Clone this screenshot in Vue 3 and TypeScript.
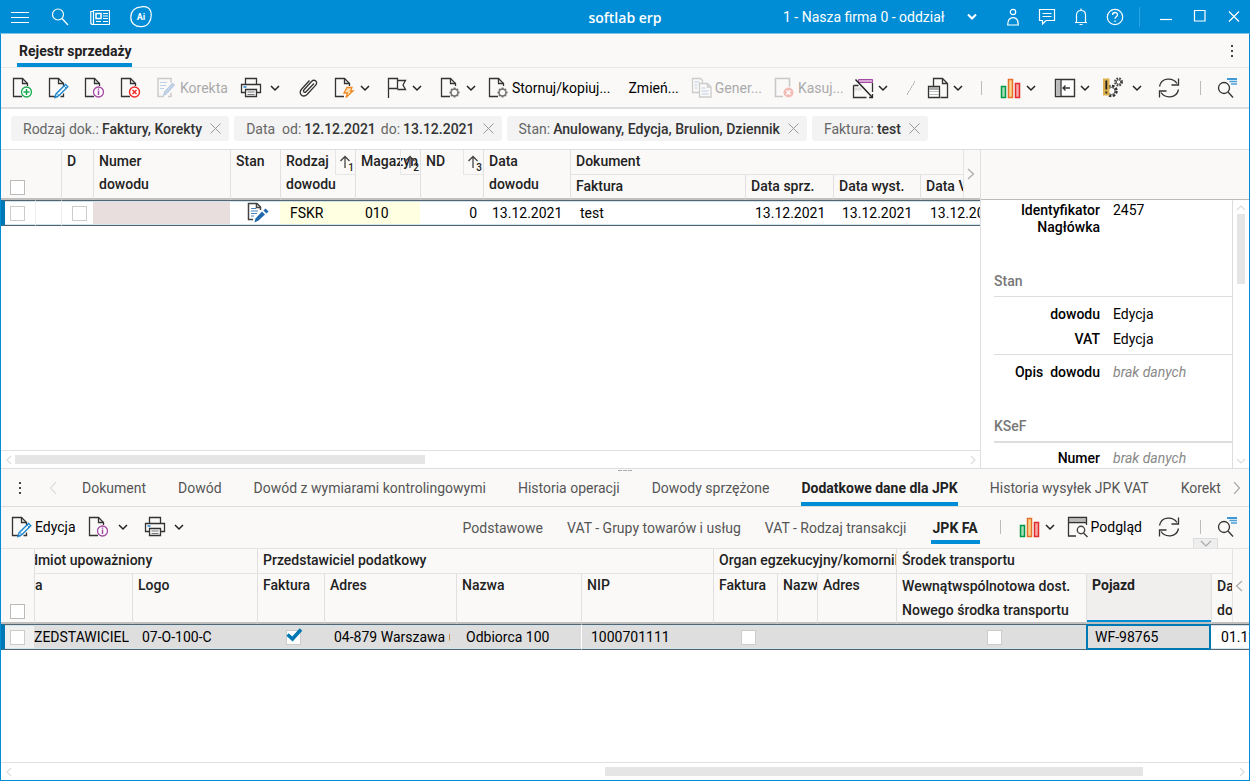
<script setup lang="ts">
import { ref } from 'vue'

const doc = '<path class="k" d="M10 19.5H1.500V1.500H10.500L15.500 6.500V9"/><path class="k" d="M10.500 1.500V6.500H15.500"/>'
const gear = '<circle cx="14.500" cy="15.500" r="3.500" fill="none" stroke="#777" stroke-width="1.500"/><path d="M14.500 10.500v2M14.500 18.500v2M9.500 15.500h2M17.500 15.500h2M11 12l1.400 1.400M16.600 17.600L18 19M18 12l-1.400 1.400M12.400 17.600L11 19" stroke="#777" stroke-width="2"/>'
const chart = '<path d="M1.500 9.500h4v11h-4z" fill="#a9dbb8" stroke="#009a44" stroke-width="1.500"/><path d="M8.500 2.500h4v18h-4z" fill="#fbd48e" stroke="#e6702a" stroke-width="1.500"/><path d="M15.500 6.500h4v14h-4z" fill="#f5a9a9" stroke="#e22b2b" stroke-width="1.500"/>'
const pen = '<path d="M17.500 7.500l2.300 2.300L10.500 19l-3.500 1.500 1-3.600z" fill="#fff" stroke="#1b85cf" stroke-width="1.400"/><path d="M9 16.500l2 2M16 9l2.300 2.300" stroke="#1b85cf"/>'

const icons: Record<string, string> = {
  menu: '<path class="w" d="M1 5.500h18M1 10.500h18M1 15.500h18"/>',
  find: '<circle class="w" cx="8" cy="7.500" r="5.500"/><path class="w" d="M12 11.500l6 6.500"/>',
  news: '<path class="w" d="M3.500 3.500h16v14h-16z"/><path class="w" d="M3 4.500H.8v11q0 2 2 2h1"/><path d="M6 6.500h5v5H6z" fill="none" stroke="#fff" stroke-width="1.500"/><path class="w" d="M13 6.500h5M13 9h5M13 11.500h5M6 14.500h5M13 14.500h5"/>',
  ai: '<path class="w" d="M11 .8C17 0 21 2 21.200 8.500C21.500 15.500 17.500 20.500 11.500 20.700C5 21 .8 17 .8 11.500C.8 5 5 1.300 11 .8z"/><text x="11" y="14" text-anchor="middle" font-size="9" font-weight="700" fill="#fff">Ai</text>',
  person: '<circle class="w" cx="10" cy="5" r="2.700"/><path class="w" d="M4.700 18c0-5 2-7.300 5.300-7.300s5.300 2.300 5.300 7.300z"/>',
  chat: '<path class="w" d="M2.500 2.500h15v11H9l-3.500 3.500v-3.500h-3z"/><path class="w" d="M5.500 6.500h9M5.500 9.500h9"/>',
  bell: '<path class="w" d="M4 15.500h12M5.500 15.500V8c0-3 2-4.500 4.500-4.500S14.500 5 14.500 8v7.500M10 1.500v2M8.500 17.500h3"/>',
  help: '<circle class="w" cx="10" cy="10" r="7.700"/><path d="M7.500 8c0-3.300 5-3.300 5-.3 0 2-2.500 2-2.500 4M10 13.500v1.500" fill="none" stroke="#fff" stroke-width="1.300"/>',
  min: '<path class="w" d="M4 12.500h12"/>',
  max: '<path class="w" d="M4.500 3.500h10.500v10.500h-10.500z"/>',
  close: '<path class="w" d="M5 4.500l10 10M15 4.500l-10 10"/>',
  add: doc + '<circle cx="14.500" cy="15" r="5" fill="#fff" stroke="#1aab50" stroke-width="1.300"/><path d="M14.500 12v6M11.500 15h6" stroke="#1aab50" stroke-width="1.500"/>',
  edit: doc + pen + '<path class="k" d="M12.500 19.500h3v-3"/>',
  info: doc + '<circle cx="14.500" cy="15" r="5" fill="#fff" stroke="#a349a4" stroke-width="1.300"/><path d="M14.500 13.500v4.500M14.500 11.500v1.200" stroke="#a349a4" stroke-width="1.500"/>',
  del: doc + '<circle cx="14.500" cy="15" r="5" fill="#fff" stroke="#ee2b2b" stroke-width="1.400"/><path d="M12.500 13l4 4M16.500 13l-4 4" stroke="#ee2b2b" stroke-width="1.500"/>',
  correct: '<path d="M8 19.500H2V1.500h13v4M15 16v3.500h-3" fill="none" stroke="#ccc" stroke-width="1.500"/><path d="M4 5.500h7M4 8.500h6M4 11.500h4" stroke="#bcd0e6"/><path d="M16.500 6l2 2L11 16.500l-3.500 2 1-3.700z" fill="#c3d4ea" stroke="#b4c8e2"/>',
  print: '<path class="k" d="M5.500 7V1.500h11V7M5.500 15.500h-4V7.500h19v8h-4M5.500 12.500h11v7h-11z" stroke-width="1.500"/><path d="M7.500 15h7M7.500 17.500h7" stroke="#777"/><path d="M3.500 10h3" stroke="#1b85cf" stroke-width="1.500"/>',
  clip: '<path class="k" d="M16 6.500L8 14.800c-1.500 1.500-3.500-.4-2-2L13.500 4.500c3-3 7 .5 4.200 3.600L9.300 17.300C5 21.500-.5 16.500 3.700 12L11.500 3.500" stroke-width="1.500"/>',
  bolt: doc + '<path d="M13 10.500h5l-1.500 3.500h2.500l-7 6.500 1.500-4.500h-3.500z" fill="#ffe2b5" stroke="#f08a24" stroke-width="1.300"/>',
  flag: '<path class="k" d="M2.500 21V1.500h9v10h-9M11.500 3.500h8l-2.500 4.500 2.500 4.500h-8" stroke-width="1.500"/>',
  gearDoc: doc + gear,
  generate: '<g fill="none" stroke="#ccc" stroke-width="1.300"><path d="M8 15.500H1.500V1.500h8l2 2v3"/><path d="M8.500 6.500h8l3.500 3.500v10H8.500z"/><path d="M16.500 6.500v3.500h3.500"/></g><path d="M3.500 5h5M3.500 8h3M3.500 11h3M10.500 11h4M10.500 14h7M10.500 17h7" stroke="#bcd0e6"/>',
  erase: '<path d="M9 19.500H1.500V1.500h14v8" fill="none" stroke="#c8c8c8" stroke-width="1.500"/><circle cx="14.500" cy="15.500" r="5" fill="#f2bdb6"/><path d="M12.500 13.500l4 4M16.500 13.500l-4 4" stroke="#fff" stroke-width="1.500"/>',
  windowOff: '<path d="M6.500 2.500h14v3h-14z" fill="#d8a8d8" stroke="#a349a4"/><path d="M1.500 10.500h8v3h-8z" fill="#ddd"/><path class="k" d="M20.500 6v9M1.500 8.500v12h13M1.500 8.500h5M17 20.500h3.500V17"/><path d="M3.500 2.500l17 18" stroke="#222" stroke-width="1.500"/>',
  tableDoc: '<path class="k" d="M6.500 9V1.500h9l5 5v14h-7M15.500 1.500v5h5"/><path d="M1.500 9.500h11v11h-11z" fill="#fff" stroke="#333" stroke-width="1.300"/><path d="M2 10h10v3H2z" fill="#aaa"/><path d="M2 14.500h10M2 17.500h10" stroke="#bbb"/>',
  chart,
  panel: '<path d="M1.500 2.500h19v17h-19z" fill="#fff" stroke="#333" stroke-width="1.400"/><path d="M2.200 3.200h4.300v15.600H2.200z" fill="#bbb"/><path class="k" d="M7 3v16M9 11h7M11.500 8.500L9 11l2.500 2.500"/>',
  alert: '<circle cx="9.500" cy="14" r="5" fill="none" stroke="#333" stroke-width="2.500" stroke-dasharray="2.500 1.400"/><circle cx="9.500" cy="14" r="3.500" fill="#fff" stroke="#555"/><circle cx="16.500" cy="5" r="3.500" fill="none" stroke="#444" stroke-width="2" stroke-dasharray="1.700 1.100"/><circle cx="16.500" cy="5" r="2.200" fill="#fff" stroke="#555"/><path d="M1 1.500h6.500v17H1z" fill="#ddb04d"/><path d="M4.300 3.500v9M4.300 14.500v2" stroke="#222" stroke-width="1.800"/>',
  refresh: '<path class="k" d="M1.500 9.500C3.500 0 15 .5 19 6.500M20.500 12.500C18.500 22 7 21.500 3 15.500M20.500 1.500v6.500h-7M1.500 20.500V14h7" stroke-width="1.400"/>',
  query: '<circle class="k" cx="7" cy="11" r="5.500" stroke-width="1.500"/><path class="k" d="M11 15l5 5.500" stroke-width="1.500"/><path d="M10 2h10" stroke="#0078c8" stroke-width="1.500"/><path d="M12.500 4.500h7.500M14 7h6" stroke="#4a9fd8" stroke-width="1.300"/>',
  preview: '<path d="M1.500 2.500h18v3h-18z" fill="#bbb"/><path class="k" d="M9 20H1.500V1.500h18V9M1.500 6.500h18"/><circle cx="14" cy="14" r="3.700" fill="#fff" stroke="#444" stroke-width="1.400"/><path class="k" d="M16.500 17l4 4"/>',
  state: '<path d="M6 17.500H1.500V1.500h8.500l3.500 3.500V8" fill="none" stroke="#444" stroke-width="1.500"/><path d="M9.500 1.500V5.500h4" fill="none" stroke="#444" stroke-width="1.500"/><path d="M4 6.500h5M4 9h7M4 11.500h6M4 14h3" stroke="#4a87c0"/><path d="M15 9.500l3 3-6.500 6-4 2 1-4z" fill="#1f68b0"/><path d="M17.500 7.500l3 3" stroke="#1f68b0" stroke-width="3"/>',
}

interface Tool { icon?: string; label?: string; menu?: boolean; off?: boolean; gap?: string; sep?: string; tip: string; inner?: string }
const tools: Tool[] = [
  { icon: 'add', tip: 'Dodaj' },
  { icon: 'edit', tip: 'Edytuj' },
  { icon: 'info', tip: 'Informacje' },
  { icon: 'del', tip: 'Usuń' },
  { icon: 'correct', label: 'Korekta', off: true, tip: 'Korekta' },
  { icon: 'print', menu: true, gap: 'g12', inner: 'loose', tip: 'Drukuj' },
  { icon: 'clip', gap: 'g18', tip: 'Załączniki' },
  { icon: 'bolt', menu: true, tip: 'Akcje' },
  { icon: 'flag', menu: true, gap: 'g16', tip: 'Flaga' },
  { icon: 'gearDoc', menu: true, gap: 'g18', tip: 'Operacje' },
  { icon: 'gearDoc', label: 'Stornuj/kopiuj...', gap: 'g12', tip: 'Stornuj/kopiuj' },
  { label: 'Zmień...', gap: 'g18', tip: 'Zmień' },
  { icon: 'generate', label: 'Gener...', off: true, gap: 'g12', tip: 'Generuj' },
  { icon: 'erase', label: 'Kasuj...', off: true, gap: 'g12', tip: 'Kasuj' },
  { icon: 'windowOff', menu: true, gap: 'g8', tip: 'Okno' },
  { sep: 'slash', gap: 'push', tip: '' },
  { icon: 'tableDoc', menu: true, gap: 'g12', tip: 'Zestawienia' },
  { sep: 'bar', gap: 'g18', tip: '' },
  { icon: 'chart', menu: true, gap: 'g18', tip: 'Wykresy' },
  { icon: 'panel', menu: true, gap: 'g18', tip: 'Panel' },
  { icon: 'alert', menu: true, gap: 'g12', inner: 'loose', tip: 'Ustawienia' },
  { icon: 'refresh', gap: 'g16', tip: 'Odśwież' },
  { sep: 'bar', gap: 'g20', tip: '' },
  { icon: 'query', gap: 'g16', tip: 'Wyszukaj' },
]

const filters = [
  [['Rodzaj dok.:', 'Faktury, Korekty']],
  [['Data\u00a0 od:', '12.12.2021'], ['do:', '13.12.2021']],
  [['Stan:', 'Anulowany, Edycja, Brulion, Dziennik']],
  [['Faktura:', 'test']],
]

const tabs = ['Dokument', 'Dowód', 'Dowód z wymiarami kontrolingowymi', 'Historia operacji', 'Dowody sprzężone', 'Dodatkowe dane dla JPK', 'Historia wysyłek JPK VAT', 'Korekt']
const subTabs = ['Podstawowe', 'VAT - Grupy towarów i usług', 'VAT - Rodzaj transakcji', 'JPK FA']
const tab = ref('Dodatkowe dane dla JPK')
const subTab = ref('JPK FA')
const company = ref('1 - Nasza firma 0 - oddział')
</script>

<template>
  <div class="app">
    <header class="title-bar">
      <div class="tb-left">
        <button aria-label="Menu"><svg width="20" height="20" viewBox="0 0 20 20" v-html="icons.menu" /></button>
        <button aria-label="Szukaj"><svg width="20" height="20" viewBox="0 0 20 20" v-html="icons.find" /></button>
        <button aria-label="Aktualności"><svg width="20" height="20" viewBox="0 0 20 20" v-html="icons.news" /></button>
        <button aria-label="Asystent"><svg width="22" height="22" viewBox="0 0 22 22" v-html="icons.ai" /></button>
      </div>
      <div class="brand">softlab erp</div>
      <div class="tb-right">
        <label class="company">
          <select v-model="company" aria-label="Firma"><option>1 - Nasza firma 0 - oddział</option></select>
          <svg width="10" height="8" viewBox="0 0 10 8"><path d="M1 1.500l4 4 4-4" fill="none" stroke="#fff" stroke-width="2" /></svg>
        </label>
        <button aria-label="Użytkownik"><svg width="20" height="20" viewBox="0 0 20 20" v-html="icons.person" /></button>
        <button aria-label="Wiadomości"><svg width="20" height="20" viewBox="0 0 20 20" v-html="icons.chat" /></button>
        <button aria-label="Powiadomienia"><svg width="20" height="20" viewBox="0 0 20 20" v-html="icons.bell" /></button>
        <button aria-label="Pomoc"><svg width="20" height="20" viewBox="0 0 20 20" v-html="icons.help" /></button>
        <span class="tb-sep" />
        <button aria-label="Minimalizuj"><svg width="20" height="20" viewBox="0 0 20 20" v-html="icons.min" /></button>
        <button aria-label="Maksymalizuj"><svg width="20" height="20" viewBox="0 0 20 20" v-html="icons.max" /></button>
        <button aria-label="Zamknij"><svg width="20" height="20" viewBox="0 0 20 20" v-html="icons.close" /></button>
      </div>
    </header>

    <div class="window">
      <div class="page-tabs">
        <button class="page-tab">Rejestr sprzedaży</button>
        <button class="dots" aria-label="Więcej"><i /><i /><i /></button>
      </div>

      <div class="toolbar main-tools">
        <template v-for="(t, i) in tools" :key="i">
          <span v-if="t.sep" :class="[t.sep, t.gap]" />
          <button v-else class="tool" :class="[t.gap, t.inner]" :disabled="t.off" :aria-label="t.tip">
            <svg v-if="t.icon" width="22" height="22" viewBox="0 0 22 22" v-html="icons[t.icon]" />
            <span v-if="t.label">{{ t.label }}</span>
            <svg v-if="t.menu" class="chev" width="10" height="8" viewBox="0 0 10 8"><path d="M1 2l4 4 4-4" /></svg>
          </button>
        </template>
      </div>

      <div class="filters">
        <div v-for="(f, i) in filters" :key="i" class="chip">
          <template v-for="(p, j) in f" :key="j"><span>{{ p[0] }}</span><b>{{ p[1] }}</b></template>
          <button aria-label="Usuń filtr"><svg width="11" height="11" viewBox="0 0 11 11"><path d="M.5 .5l10 10M10.500 .5l-10 10" stroke="#999" /></svg></button>
        </div>
      </div>

      <section class="upper">
        <div class="grid-pane">
          <div class="grid-body">
            <table>
              <colgroup>
                <col class="c34"><col class="c26"><col class="c32"><col class="c137"><col class="c50"><col class="c75"><col class="c65"><col class="c63"><col class="c87"><col class="c175"><col class="c88"><col class="c87"><col>
              </colgroup>
              <thead>
                <tr>
                  <th rowspan="2" colspan="2" class="pick"><input type="checkbox" aria-label="Zaznacz wszystkie"></th>
                  <th rowspan="2">D</th>
                  <th rowspan="2">Numer<br>dowodu</th>
                  <th rowspan="2">Stan</th>
                  <th rowspan="2">Rodzaj<br>dowodu<button class="sort" aria-label="Sortuj"><svg width="14" height="14" viewBox="0 0 14 14"><path d="M6 13V2M1.500 6L6 1.500 10.500 6" /></svg><small>1</small></button></th>
                  <th rowspan="2">Magazyn<button class="sort clear" aria-label="Sortuj"><svg width="14" height="14" viewBox="0 0 14 14"><path d="M6 13V2M1.500 6L6 1.500 10.500 6" /></svg><small>2</small></button></th>
                  <th rowspan="2">ND<button class="sort" aria-label="Sortuj"><svg width="14" height="14" viewBox="0 0 14 14"><path d="M6 13V2M1.500 6L6 1.500 10.500 6" /></svg><small>3</small></button></th>
                  <th rowspan="2">Data<br>dowodu</th>
                  <th colspan="4" class="group">Dokument</th>
                </tr>
                <tr class="sub">
                  <th>Faktura</th><th>Data sprz.</th><th>Data wyst.</th><th>Data VAT</th>
                </tr>
              </thead>
              <tbody>
                <tr>
                  <td class="pick"><input type="checkbox" aria-label="Zaznacz wiersz"></td>
                  <td class="line" />
                  <td class="mid line"><input type="checkbox" aria-label="D"></td>
                  <td class="pink" />
                  <td class="mid"><svg width="22" height="22" viewBox="0 0 22 22" v-html="icons.state" /></td>
                  <td class="yellow">FSKR</td><td class="yellow">010</td><td class="num">0</td><td class="date">13.12.2021</td><td>test</td><td>13.12.2021</td><td class="date">13.12.2021</td><td>13.12.2021</td>
                </tr>
              </tbody>
            </table>
            <button class="gutter" aria-label="Dalej"><svg width="8" height="12" viewBox="0 0 8 12"><path d="M1 1l5.500 5L1 11" /></svg></button>
          </div>
          <div class="hscroll">
            <svg width="6" height="10" viewBox="0 0 6 10"><path d="M5 1L1 5l4 4" /></svg>
            <div class="track"><span class="thumb first" /></div>
            <svg width="6" height="10" viewBox="0 0 6 10"><path d="M1 1l4 4-4 4" /></svg>
          </div>
        </div>

        <aside class="details">
          <div class="details-head" />
          <div class="details-body">
            <div class="details-list">
              <dl class="top"><dt>Identyfikator Nagłówka</dt><dd>2457</dd></dl>
              <h3>Stan</h3>
              <dl class="ruled"><dt>dowodu</dt><dd>Edycja</dd><dt>VAT</dt><dd>Edycja</dd></dl>
              <dl class="ruled last"><dt>Opis&nbsp; dowodu</dt><dd class="none">brak danych</dd></dl>
              <h3>KSeF</h3>
              <dl class="thick"><dt>Numer</dt><dd class="none">brak danych</dd></dl>
            </div>
            <div class="vscroll">
              <svg width="10" height="6" viewBox="0 0 10 6"><path d="M1 5l4-4 4 4" /></svg>
              <span class="vthumb" />
              <svg width="10" height="6" viewBox="0 0 10 6"><path d="M1 1l4 4 4-4" /></svg>
            </div>
          </div>
        </aside>
      </section>

      <section class="lower">
        <div class="grip"><i /><i /><i /></div>
        <nav class="tabs">
          <button class="dots" aria-label="Więcej"><i /><i /><i /></button>
          <button class="arrow faint" aria-label="Poprzednie"><svg width="8" height="12" viewBox="0 0 8 12"><path d="M7 0L1.500 6 7 12" /></svg></button>
          <div class="tab-strip">
            <button v-for="t in tabs" :key="t" :class="{ on: t === tab }" @click="tab = t">{{ t }}</button>
          </div>
          <button class="arrow" aria-label="Następne"><svg width="8" height="12" viewBox="0 0 8 12"><path d="M1 0l5.500 6L1 12" /></svg></button>
        </nav>

        <div class="toolbar sub-tools">
          <button class="tool" aria-label="Edycja"><svg width="22" height="22" viewBox="0 0 22 22" v-html="icons.edit" /><span>Edycja</span></button>
          <button class="tool loose g12" aria-label="Informacje"><svg width="22" height="22" viewBox="0 0 22 22" v-html="icons.info" /><svg class="chev" width="10" height="8" viewBox="0 0 10 8"><path d="M1 2l4 4 4-4" /></svg></button>
          <button class="tool loose g16" aria-label="Drukuj"><svg width="22" height="22" viewBox="0 0 22 22" v-html="icons.print" /><svg class="chev" width="10" height="8" viewBox="0 0 10 8"><path d="M1 2l4 4 4-4" /></svg></button>
          <div class="sub-tabs push">
            <button v-for="t in subTabs" :key="t" :class="{ on: t === subTab }" @click="subTab = t">{{ t }}</button>
          </div>
          <span class="bar g20" />
          <button class="tool g18" aria-label="Wykresy"><svg width="22" height="22" viewBox="0 0 22 22" v-html="icons.chart" /><svg class="chev" width="10" height="8" viewBox="0 0 10 8"><path d="M1 2l4 4 4-4" /></svg></button>
          <button class="tool g12" aria-label="Podgląd"><svg width="22" height="22" viewBox="0 0 22 22" v-html="icons.preview" /><span>Podgląd</span></button>
          <button class="tool g16" aria-label="Odśwież"><svg width="22" height="22" viewBox="0 0 22 22" v-html="icons.refresh" /></button>
          <span class="bar g20" />
          <button class="tool g16" aria-label="Wyszukaj"><svg width="22" height="22" viewBox="0 0 22 22" v-html="icons.query" /></button>
          <button class="collapse" aria-label="Zwiń"><svg width="12" height="7" viewBox="0 0 12 7"><path d="M1 1l5 5 5-5" /></svg></button>
        </div>

        <div class="grid-body">
          <table class="jpk">
            <colgroup>
              <col class="c33"><col class="c98"><col class="c125"><col class="c67"><col class="c132"><col class="c125"><col class="c132"><col class="c64"><col class="c40"><col class="c79"><col class="c190"><col class="c125"><col>
            </colgroup>
            <thead>
              <tr>
                <th rowspan="2" class="pick"><input type="checkbox" aria-label="Zaznacz wszystkie"></th>
                <th colspan="2" class="group cut-group">dmiot upoważniony</th>
                <th colspan="4" class="group">Przedstawiciel podatkowy</th>
                <th colspan="3" class="group">Organ egzekucyjny/komornik</th>
                <th colspan="3" class="group">Środek transportu</th>
              </tr>
              <tr class="sub deep">
                <th class="cut">a</th><th>Logo</th><th>Faktura</th><th>Adres</th><th>Nazwa</th><th>NIP</th><th>Faktura</th><th>Nazwa</th><th>Adres</th>
                <th class="two">Wewnątwspólnotowa dost.<br>Nowego środka transportu</th><th class="active">Pojazd</th><th class="two">Data<br>dostawy</th>
              </tr>
            </thead>
            <tbody>
              <tr>
                <td class="pick"><input type="checkbox" aria-label="Zaznacz wiersz"></td>
                <td class="cut">ZEDSTAWICIEL</td><td>07-O-100-C</td>
                <td class="mid"><span class="ticked"><input type="checkbox" checked aria-label="Faktura"><svg width="17" height="14" viewBox="0 0 17 14"><path d="M1.500 6.500l5 4.500L15 1.500" /></svg></span></td>
                <td class="trim"><span>04-879 Warszawa ul. Prosta</span></td><td>Odbiorca 100</td><td class="split">1000701111</td>
                <td class="mid"><input type="checkbox" aria-label="Organ faktura"></td><td /><td />
                <td class="mid"><input type="checkbox" aria-label="Nowy środek transportu"></td>
                <td class="focus">WF-98765</td><td class="plain">01.12.2021</td>
              </tr>
            </tbody>
          </table>
          <button class="gutter low" aria-label="Wstecz"><svg width="8" height="12" viewBox="0 0 8 12"><path d="M7 1L1.500 6 7 11" /></svg></button>
        </div>
        <div class="hscroll bottom">
          <svg width="6" height="10" viewBox="0 0 6 10"><path d="M5 1L1 5l4 4" /></svg>
          <div class="track"><span class="thumb second" /></div>
          <svg width="6" height="10" viewBox="0 0 6 10"><path d="M1 1l4 4-4 4" /></svg>
        </div>
      </section>
    </div>
  </div>
</template>

<style>
body { margin: 0; }
.k { fill: none; stroke: #333; stroke-width: 1.3; }
.w { fill: none; stroke: #fff; stroke-width: 1.2; }
</style>

<style scoped>
* { box-sizing: border-box; }
.app { height: 100vh; display: flex; flex-direction: column; overflow: hidden; font: 14px/16px Roboto, "Liberation Sans", sans-serif; color: #000; background: #fff; }
button, select, input { font: inherit; color: inherit; background: none; border: 0; padding: 0; margin: 0; }
svg { display: block; flex: none; }
button { flex: none; }

.title-bar { flex: none; height: 33px; background: #008dd6; color: #fff; display: grid; grid-template-columns: 1fr auto 1fr; align-items: center; }
.tb-left { display: flex; align-items: center; gap: 20px; padding-left: 10px; }
.brand { font: 600 14px/20px "Open Sans", "Noto Sans", sans-serif; padding-top: 2px; }
.tb-right { display: flex; align-items: center; justify-content: flex-end; gap: 14px; padding-right: 6px; }
.company { display: flex; align-items: center; gap: 22px; padding-right: 12px; }
.company select { appearance: none; }
.company option { color: #000; }
.tb-sep { width: 1px; height: 20px; margin-right: 2px; background: #2ba4e4; }

.window { flex: 1; min-height: 0; display: flex; flex-direction: column; border: 1px solid #008dd6; border-top-color: #7cc3ea; }
.page-tabs { flex: none; height: 34px; display: flex; justify-content: space-between; background: #faf9f8; border-bottom: 1px solid #e8e8e8; padding: 0 16px; }
.page-tab { font-weight: 700; color: #222; padding: 4px 0 0 2px; border-bottom: 4px solid #008dd6; }
.dots { display: flex; flex-direction: column; justify-content: center; gap: 3px; }
.dots i { width: 2px; height: 2px; background: #444; }

.toolbar { flex: none; display: flex; align-items: center; background: #faf9f8; }
.main-tools { height: 41px; border-bottom: 2px solid #dedede; padding: 0 10px 0 11px; }
.tool { display: flex; align-items: center; gap: 2px; }
.tool + .tool { margin-left: 14px; }
.tool .chev { margin-left: 2px; }
.tool.loose .chev { margin-left: 6px; }
.tool:disabled { color: #aaa; }
.toolbar .g8 { margin-left: 8px; }
.toolbar .g12 { margin-left: 12px; }
.toolbar .g16 { margin-left: 16px; }
.toolbar .g18 { margin-left: 18px; }
.toolbar .g20 { margin-left: 20px; }
.toolbar .push { margin-left: auto; }
.chev path { fill: none; stroke: #222; stroke-width: 1.5; }
.bar { width: 1px; height: 14px; background: #bbb; }
.slash { width: 8px; height: 14px; background: linear-gradient(120deg, transparent 47%, #bbb 47%, #bbb 53%, transparent 53%); }

.filters { flex: none; height: 40px; display: flex; align-items: center; gap: 5px; padding: 0 10px 1px; }
.chip { display: flex; align-items: center; gap: 3px; height: 25px; padding: 0 8px 0 12px; background: #f3f3f3; border-radius: 3px; color: #666; }
.chip b { font-weight: 500; color: #333; }
.chip b + span { margin-left: 2px; }
.chip button { margin-left: 5px; }

.upper { flex: none; height: 319px; display: flex; border-top: 1px solid #ddd; }
.grid-pane { flex: 1; min-width: 0; display: flex; flex-direction: column; }
.grid-body { flex: 1; min-height: 0; position: relative; overflow: hidden; }
table { width: 100%; table-layout: fixed; border-collapse: separate; border-spacing: 0; }
th { padding: 0 0 0 5px; background: #faf9f8; border-left: 1px solid #e0e0e0; text-align: left; vertical-align: top; font-weight: 500; color: #222; line-height: 23px; white-space: nowrap; overflow: hidden; position: relative; }
th[rowspan], .sub th { border-bottom: 2px solid #c0c0c0; }
.sub th { height: 25px; line-height: 22px; }
.sub th.two { line-height: 24px; }
th.group { height: 25px; border-bottom: 1px solid #e4e4e4; line-height: 22px; }
th.pick { padding: 0 0 3px 9px; vertical-align: bottom; border-left: 0; }
td { height: 26px; padding: 0 0 0 10px; border-top: 1px solid #56646f; border-bottom: 1px solid #56646f; box-shadow: inset 0 1px #cfe3ec, inset 0 -1px #cfe3ec; white-space: nowrap; overflow: hidden; }
td.date { padding-left: 9px; }
td.pick { border-left: 4px solid #0078b4; padding-left: 5px; }
td.mid { text-align: center; padding: 0 0 0 5px; }
td.mid > svg { margin: 0 auto; }
td.line { border-left: 1px solid #eee; padding-left: 4px; }
td.num { text-align: right; padding-right: 6px; }
.pink { background: #e8dedd; }
.yellow { background: #ffffe1; }
input[type=checkbox] { appearance: none; display: inline-block; vertical-align: middle; width: 15px; height: 15px; background: #fff; border: 1px solid #bbb; }
td input[type=checkbox] { border-color: #ccc; }
th input[type=checkbox] { vertical-align: bottom; }
.c26 { width: 26px; } .c32 { width: 32px; } .c33 { width: 33px; } .c34 { width: 34px; } .c40 { width: 40px; } .c50 { width: 50px; }
.c63 { width: 63px; } .c64 { width: 64px; } .c65 { width: 65px; } .c67 { width: 67px; } .c75 { width: 75px; } .c79 { width: 79px; }
.c87 { width: 87px; } .c88 { width: 88px; } .c98 { width: 98px; } .c125 { width: 125px; } .c132 { width: 132px; } .c137 { width: 137px; }
.c175 { width: 175px; } .c190 { width: 190px; }
.sort { position: absolute; top: 0; right: 0; width: 20px; height: 25px; padding: 5px 0 0 3px; display: flex; align-items: flex-start; justify-content: flex-start; background: #faf9f8; border: 1px solid #e6e6e6; border-width: 0 0 1px 1px; }
.sort.clear { background: none; }
.sort path { fill: none; stroke: #444; stroke-width: 1.3; }
.sort small { position: absolute; right: 1px; bottom: 0; font-size: 10px; line-height: 12px; }
.gutter { position: absolute; top: 0; right: 0; width: 17px; height: 48px; background: #faf9f8; border-left: 1px solid #e4e4e4; padding-left: 3px; }
.gutter.low { height: 73px; padding-left: 2px; }
.gutter path, .arrow path, .collapse path { fill: none; stroke: #aaa; stroke-width: 1.2; }

.hscroll { flex: none; height: 18px; display: flex; align-items: center; gap: 2px; padding: 0 4px 0 5px; border-top: 1px solid #e0e0e0; background: #fff; }
.track { flex: 1; height: 9px; display: flex; }
.hscroll path, .vscroll path { fill: none; stroke: #ddd; stroke-width: 1.2; }
.thumb { background: #e5e5e5; }
.thumb.first { width: 43%; margin-left: 1px; }
.thumb.second { width: 44%; margin-left: calc(48% + 4px); }

.details { flex: none; width: 269px; display: flex; flex-direction: column; border-left: 1px solid #e0e0e0; }
.details-head { height: 50px; background: #faf9f8; border-bottom: 1px solid #bbb; }
.details-body { flex: 1; min-height: 0; display: flex; }
.details-list { flex: 1; min-width: 0; overflow: hidden; padding-left: 13px; }
.vscroll { width: 17px; border-left: 1px solid #ddd; display: flex; flex-direction: column; align-items: center; padding: 5px 0 4px; }
.vthumb { width: 8px; height: 70px; margin: 3px 0 auto; background: #e5e5e5; }
dl { margin: 0; display: grid; grid-template-columns: 106px 1fr; column-gap: 13px; row-gap: 8px; line-height: 17px; }
dt { text-align: right; font-weight: 500; }
dd { margin: 0; }
.none { color: #888; font-style: italic; }
.top { padding: 2px 0 37px; }
h3 { margin: 0; font: inherit; font-weight: 500; line-height: 16px; color: #777; padding-bottom: 7px; }
.ruled { border-top: 1px solid #ddd; padding: 9px 0 6px; }
.last { padding-bottom: 37px; }
.thick { border-top: 2px solid #ddd; padding-top: 7px; }

.lower { flex: 1; min-height: 0; display: flex; flex-direction: column; position: relative; border-top: 1px solid #ddd; }
.grip { position: absolute; top: 1px; left: 0; right: 0; display: flex; justify-content: center; gap: 1px; }
.grip i { width: 4px; height: 1px; background: #aaa; }
.tabs { flex: none; height: 38px; display: flex; background: #faf9f8; border-bottom: 1px solid #ddd; padding: 0 8px 0 18px; }
.arrow { padding-left: 28px; }
.arrow.faint path { stroke: #ddd; }
.tab-strip { flex: 1; min-width: 0; display: flex; gap: 32px; overflow: hidden; margin-left: 25px; }
.tab-strip + .arrow { padding-left: 8px; }
.tab-strip button, .sub-tabs button { color: #555; border: solid transparent; border-width: 4px 0; white-space: nowrap; }
.tab-strip .on, .sub-tabs .on { color: #222; font-weight: 700; border-bottom-color: #008dd6; }
.sub-tools { position: relative; height: 42px; border-bottom: 1px solid #e4e4e4; padding: 0 10px 2px; }
.sub-tabs { display: flex; gap: 24px; height: 32px; align-self: flex-end; margin-bottom: 2px; }
.sub-tabs .on { padding: 0 2px; }
.collapse { position: absolute; right: 31px; bottom: 0; width: 25px; height: 10px; background: #eee; border: 1px solid #ddd; border-bottom: 0; display: flex; align-items: center; justify-content: center; }

.jpk .deep th { height: 50px; }
.jpk td { background: #dedede; }
.jpk td.mid { padding-left: 6px; }
.jpk td.pick { background: #f0f0f0; }
.jpk th.cut { padding: 0; }
.jpk th.cut-group { text-indent: -10px; }
.jpk td.cut { padding: 0; }
.jpk td.split { border-left: 1px solid #fff; padding-left: 9px; }
.jpk td.trim { padding-right: 6px; }
.trim span { display: block; overflow: hidden; }
.jpk th.active { background: #f0efee; font-weight: 700; box-shadow: inset 0 -2px #008dd6; }
.jpk td.focus { border: 2px solid #0078b4; padding-left: 7px; box-shadow: none; }
.jpk td.plain { background: #fff; }
.ticked { position: relative; display: inline-block; }
.ticked svg { position: absolute; left: 0; top: -1px; }
.ticked path { fill: none; stroke: #0078b4; stroke-width: 3.5; }
</style>
